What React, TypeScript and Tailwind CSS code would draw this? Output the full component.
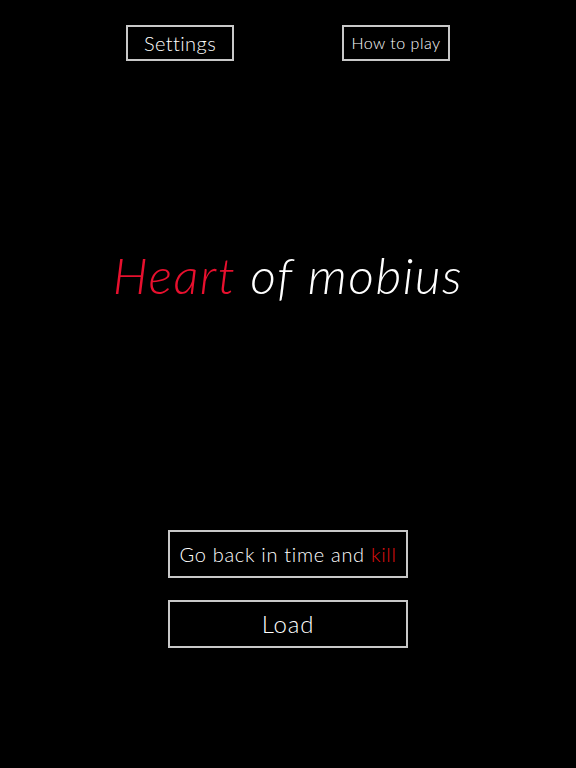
import React from "react";

export default function App() {
  const font = { fontFamily: "Lato, 'Noto Sans', sans-serif" };
  return (
    <div className="w-[576px] h-[768px] bg-black flex flex-col items-center text-white font-light" style={font}>
      <div className="flex gap-[108px] mt-[25px]">
        <button className="w-[108px] h-[36px] border-2 border-[#c8c8c8] text-[20px] tracking-[0.4px] leading-none text-white flex items-center justify-center">
          Settings
        </button>
        <button className="w-[108px] h-[36px] border-2 border-[#c8c8c8] text-[16px] tracking-[0.5px] leading-none text-white flex items-center justify-center">
          How to play
        </button>
      </div>
      <div className="mt-[184px] h-[60px] flex items-center text-[50px] italic font-light tracking-[1.5px] leading-none">
        <span className="text-[#e8102e]">Heart</span>
        <span className="ml-[14px] text-white">of mobius</span>
      </div>
      <div className="mt-[225px] flex flex-col gap-[22px]">
        <button className="w-[240px] h-[48px] border-2 border-[#c8c8c8] text-[20px] tracking-[0.7px] leading-none text-white flex items-center justify-center">
          Go back in time and&nbsp;<span className="text-[#e01010]">kill</span>
        </button>
        <button className="w-[240px] h-[48px] border-2 border-[#c8c8c8] text-[24px] tracking-[0.8px] leading-none text-white flex items-center justify-center">
          Load
        </button>
      </div>
    </div>
  );
}
